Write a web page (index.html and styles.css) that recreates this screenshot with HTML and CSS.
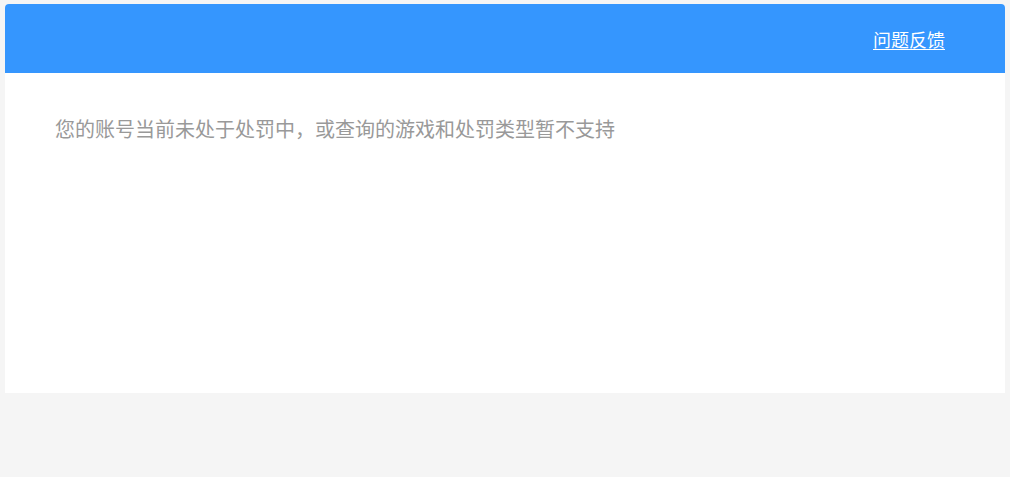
FILE: index.html
```html
<!DOCTYPE html>
<html lang="zh-CN">
<head>
<meta charset="utf-8">
<title>处罚查询</title>
<link rel="stylesheet" href="styles.css">
</head>
<body>
<div class="page">
  <div class="card">
    <header class="card-header">
      <a class="feedback" href="#">问题反馈</a>
    </header>
    <main class="card-body">
      <p class="notice">您的账号当前未处于处罚中，或查询的游戏和处罚类型暂不支持</p>
    </main>
  </div>
</div>
</body>
</html>
```
FILE: styles.css
```css
html, body {
  margin: 0;
  padding: 0;
  background: #f5f5f5;
  font-family: "Noto Sans CJK SC", "Noto Sans", sans-serif;
}
.page {
  padding: 4px 5px;
  height: 477px;
  box-sizing: border-box;
}
.card {
  background: #fff;
  height: 389px;
  border-radius: 4px 4px 0 0;
  display: flex;
  flex-direction: column;
}
.card-header {
  height: 69px;
  background: #3596fe;
  border-radius: 4px 4px 0 0;
  display: flex;
  align-items: center;
  justify-content: flex-end;
  padding: 0 60px 0 0;
}
.feedback {
  color: #fff;
  font-size: 18px;
  line-height: 24px;
  text-decoration: underline;
  text-underline-offset: 2px;
}
.card-body {
  padding: 42px 50px 0;
}
.notice {
  margin: 0;
  color: #999;
  font-size: 20px;
  line-height: 28px;
}
```
